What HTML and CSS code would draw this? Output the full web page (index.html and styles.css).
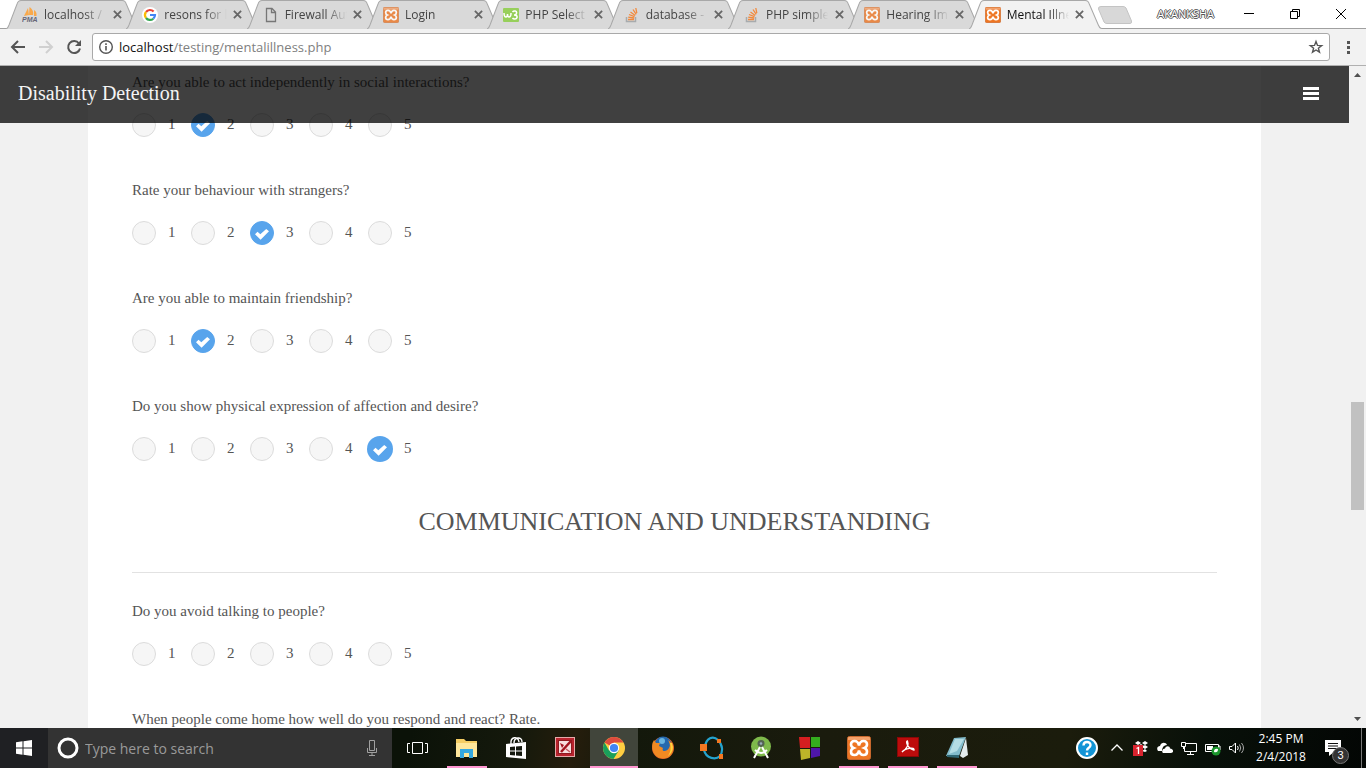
FILE: index.html
```html
<!DOCTYPE html>
<html lang="en">
<head>
<meta charset="utf-8">
<title>Mental Illness</title>
<link rel="stylesheet" href="styles.css">
</head>
<body>
<svg class="defs" aria-hidden="true">
  <symbol id="tab-shape" viewBox="0 0 133 29" preserveAspectRatio="none"><path d="M0 29C2 28 2 27 3 25L11 4Q12 .5 15 .5H116Q119 .5 120 4L129 25Q130 28 133 29" vector-effect="non-scaling-stroke"/></symbol>
  <symbol id="cross" viewBox="0 0 10 10"><path d="M1 1L9 9M9 1L1 9" fill="none" stroke="#666" stroke-width="2"/></symbol>
  <symbol id="xampp" viewBox="0 0 24 24"><rect x=".5" y=".5" width="23" height="23" rx="2" fill="#ee7623" stroke="#c8682d"/><path d="M1 2Q1 1 2 1H22Q23 1 23 2V4H1Z" fill="#f3a06a"/><path d="M12 9.500Q11 5 7.500 5Q4 5 4 8.300Q4 11 6.500 12Q4 13 4 15.700Q4 19 7.500 19Q11 19 12 14.500Q13 19 16.500 19Q20 19 20 15.700Q20 13 17.500 12Q20 11 20 8.300Q20 5 16.500 5Q13 5 12 9.500Z" fill="none" stroke="#fff" stroke-width="2.600"/></symbol>
  <symbol id="overflow" viewBox="0 0 16 16"><path d="M2.500 10v4.500h9V10" fill="none" stroke="#a8abad" stroke-width="1.500"/><path d="M4 12.500h6M4.200 10.200l6 .8M5 7.500l5.500 2.200M6.500 5l4.700 3.500M9 2.500l3.200 4.800M11.800 1l1 5.200" stroke="#f28a3d" stroke-width="1.300"/></symbol>
</svg>

<header class="browser">
  <div class="strip">
    <nav class="tabs" aria-label="Open tabs">
      <div class="tab"><svg class="shape"><use href="#tab-shape"/></svg><svg class="fav" viewBox="0 0 16 16"><path d="M6 1L2 9l5-1zM7.500 0c4 3 4 6 3.500 8H7zM12 3c3 2 2.500 4 2.500 6H12z" fill="#f9a94b"/><text x="0" y="15" class="pma">PMA</text></svg><span class="name">localhost /</span><button class="x" aria-label="Close tab"><svg><use href="#cross"/></svg></button></div>
      <div class="tab"><svg class="shape"><use href="#tab-shape"/></svg><svg class="fav" viewBox="0 0 16 16"><circle cx="8" cy="8" r="8" fill="#fff"/><g fill="none" stroke-width="2.200"><path d="M4 5A5 5 0 0 1 11.600 4.500" stroke="#ea4335"/><path d="M4 5A5 5 0 0 0 4 11" stroke="#fbbc05"/><path d="M4 11A5 5 0 0 0 11.300 11.700" stroke="#34a853"/><path d="M11.300 11.700A5 5 0 0 0 13 8H8" stroke="#4285f4"/></g></svg><span class="name">resons for l</span><button class="x" aria-label="Close tab"><svg><use href="#cross"/></svg></button></div>
      <div class="tab"><svg class="shape"><use href="#tab-shape"/></svg><svg class="fav" viewBox="0 0 16 16"><path d="M3.500 1.500H9L12.500 5V14.500H3.500ZM8.500 1.500V5.500H12.500" fill="none" stroke="#777" stroke-width="1.300"/></svg><span class="name">Firewall Aut</span><button class="x" aria-label="Close tab"><svg><use href="#cross"/></svg></button></div>
      <div class="tab"><svg class="shape"><use href="#tab-shape"/></svg><svg class="fav dim"><use href="#xampp"/></svg><span class="name">Login</span><button class="x" aria-label="Close tab"><svg><use href="#cross"/></svg></button></div>
      <div class="tab"><svg class="shape"><use href="#tab-shape"/></svg><svg class="fav" viewBox="0 0 16 16"><rect y="1" width="16" height="14" rx="1" fill="#97cf5b"/><path d="M1 6C1 9 2 10 3 10S4.500 9 4.500 7C4.500 9 5 10 6 10S8 9 8 6M9.500 5C11 3 14 4 13.500 6C13.500 7.500 12 8 11 8C13 8 14.500 9 14 10.500C13.500 12.500 10.500 12.500 9.500 11" fill="none" stroke="#fff" stroke-width="1.500"/></svg><span class="name">PHP Select</span><button class="x" aria-label="Close tab"><svg><use href="#cross"/></svg></button></div>
      <div class="tab"><svg class="shape"><use href="#tab-shape"/></svg><svg class="fav"><use href="#overflow"/></svg><span class="name">database -</span><button class="x" aria-label="Close tab"><svg><use href="#cross"/></svg></button></div>
      <div class="tab"><svg class="shape"><use href="#tab-shape"/></svg><svg class="fav"><use href="#overflow"/></svg><span class="name">PHP simple</span><button class="x" aria-label="Close tab"><svg><use href="#cross"/></svg></button></div>
      <div class="tab"><svg class="shape"><use href="#tab-shape"/></svg><svg class="fav dim"><use href="#xampp"/></svg><span class="name">Hearing Im</span><button class="x" aria-label="Close tab"><svg><use href="#cross"/></svg></button></div>
      <div class="tab active"><svg class="shape"><use href="#tab-shape"/></svg><svg class="fav"><use href="#xampp"/></svg><span class="name">Mental Illne</span><button class="x" aria-label="Close tab"><svg><use href="#cross"/></svg></button></div>
    </nav>
    <button class="new-tab" aria-label="New tab"><svg viewBox="0 0 36 18"><path d="M3 .5H25Q27 .5 28 2L33.500 15Q34 17.500 32 17.500H9Q7 17.500 6 16L.5 3Q0 .5 3 .5Z" fill="#d8d8d8" stroke="#c4c4c4"/></svg></button>
    <span class="profile">AKANKSHA</span>
    <div class="window">
      <button aria-label="Minimize"><svg viewBox="0 0 12 12"><path d="M1 5.500H11"/></svg></button>
      <button aria-label="Restore"><svg viewBox="0 0 12 12"><path d="M1.500 3.500H8.500V10.500H1.500ZM3.500 3.500V1.500H10.500V8.500H8.500"/></svg></button>
      <button aria-label="Close"><svg viewBox="0 0 12 12"><path d="M1 1L11 11M11 1L1 11"/></svg></button>
    </div>
  </div>
  <div class="toolbar">
    <button aria-label="Back"><svg viewBox="0 0 16 16"><path d="M15 8H2.500M8 2L2 8L8 14" fill="none" stroke="#555" stroke-width="2"/></svg></button>
    <button aria-label="Forward"><svg viewBox="0 0 16 16"><path d="M1 8H13.500M8 2L14 8L8 14" fill="none" stroke="#d0d0d0" stroke-width="2"/></svg></button>
    <button aria-label="Reload"><svg viewBox="0 0 16 16"><path d="M13 4.500A6 6 0 1 0 14 9.500" fill="none" stroke="#555" stroke-width="2"/><path d="M15 1V7H9Z" fill="#555"/></svg></button>
    <div class="address">
      <svg viewBox="0 0 16 16"><circle cx="8" cy="8" r="6.300" fill="none" stroke="#555" stroke-width="1.400"/><path d="M8 7V11.500M8 4.300V6" stroke="#555" stroke-width="1.600"/></svg>
      <a class="url" href="#top"><b>localhost</b>/testing/mentalillness.php</a>
      <button aria-label="Bookmark this page"><svg viewBox="0 0 16 16"><path d="M8 2.500L9.500 6.400L13.700 6.600L10.400 9.200L11.500 13.200L8 11L4.500 13.200L5.600 9.200L2.300 6.600L6.500 6.400Z" fill="none" stroke="#555" stroke-width="1.400"/></svg></button>
    </div>
    <button class="more" aria-label="Menu"><svg viewBox="0 0 16 16"><path d="M7 2h3v3H7zM7 7h3v3H7zM7 12h3v3H7z" fill="#555"/></svg></button>
  </div>
</header>

<div class="page">
  <div class="view" id="top">
    <header class="site">
      <a class="brand" href="#top">Disability Detection</a>
      <button class="burger" aria-label="Open menu"><i></i><i></i><i></i></button>
    </header>
    <main class="card">
      <fieldset class="question">
        <legend>Are you able to act independently in social interactions?</legend>
        <div class="scale">
          <label><input type="radio" name="q1">1</label><label><input type="radio" name="q1" checked>2</label><label><input type="radio" name="q1">3</label><label><input type="radio" name="q1">4</label><label><input type="radio" name="q1">5</label>
        </div>
      </fieldset>
      <fieldset class="question">
        <legend>Rate your behaviour with strangers?</legend>
        <div class="scale">
          <label><input type="radio" name="q2">1</label><label><input type="radio" name="q2">2</label><label><input type="radio" name="q2" checked>3</label><label><input type="radio" name="q2">4</label><label><input type="radio" name="q2">5</label>
        </div>
      </fieldset>
      <fieldset class="question">
        <legend>Are you able to maintain friendship?</legend>
        <div class="scale">
          <label><input type="radio" name="q3">1</label><label><input type="radio" name="q3" checked>2</label><label><input type="radio" name="q3">3</label><label><input type="radio" name="q3">4</label><label><input type="radio" name="q3">5</label>
        </div>
      </fieldset>
      <fieldset class="question">
        <legend>Do you show physical expression of affection and desire?</legend>
        <div class="scale">
          <label><input type="radio" name="q4">1</label><label><input type="radio" name="q4">2</label><label><input type="radio" name="q4">3</label><label><input type="radio" name="q4">4</label><label><input type="radio" name="q4" class="recent" checked>5</label>
        </div>
      </fieldset>
      <h2>COMMUNICATION AND UNDERSTANDING</h2>
      <fieldset class="question">
        <legend>Do you avoid talking to people?</legend>
        <div class="scale">
          <label><input type="radio" name="q5">1</label><label><input type="radio" name="q5">2</label><label><input type="radio" name="q5">3</label><label><input type="radio" name="q5">4</label><label><input type="radio" name="q5">5</label>
        </div>
      </fieldset>
      <fieldset class="question">
        <legend>When people come home how well do you respond and react? Rate.</legend>
      </fieldset>
    </main>
  </div>
  <div class="scrollbar" aria-hidden="true">
    <svg viewBox="0 0 17 17"><path d="M5 11H12L8.500 7Z"/></svg>
    <div class="above"></div><div class="thumb"></div><div class="below"></div>
    <svg viewBox="0 0 17 17"><path d="M5 6H12L8.500 10Z"/></svg>
  </div>
</div>

<footer class="taskbar">
  <button class="start" aria-label="Start"><svg viewBox="0 0 16 16"><path d="M0 2.200L6.500 1.300V7.500H0ZM7.500 1.200L16 0V7.500H7.500ZM0 8.500H6.500V14.700L0 13.800ZM7.500 8.500H16V16L7.500 14.800Z" fill="#fff"/></svg></button>
  <div class="search">
    <svg class="ring" viewBox="0 0 22 22"><circle cx="11" cy="11" r="9" fill="none" stroke="#fff" stroke-width="3"/></svg>
    <input type="text" placeholder="Type here to search" aria-label="Search">
    <svg class="mic" viewBox="0 0 12 18"><path d="M3.500 1.500H8.500V11.500H3.500ZM1.500 9V13.500H10.500V9M6 13.500V16.500M3 16.500H9" fill="none" stroke="#a0a0a0"/></svg>
  </div>
  <nav class="apps" aria-label="Applications">
    <button aria-label="Task view"><svg viewBox="0 0 24 24"><path d="M6.500 6.500H16.500V17.500H6.500ZM4 7.500H1.500V16.500H4M19 7.500H21.500V16.500H19" fill="none" stroke="#fff"/></svg></button>
    <button class="open" aria-label="File Explorer"><svg viewBox="0 0 24 24"><path d="M1 3H9L11 5H22V20H1Z" fill="#f5cd64"/><path d="M1 7H22V21H1Z" fill="#ffe79b"/><path d="M5 13H18V22H14V17H9V22H5Z" fill="#35a8e0"/></svg></button>
    <button aria-label="Store"><svg viewBox="0 0 24 24"><path d="M2 8L22 6V23L2 21Z" fill="#fff"/><path d="M7 8C6 1 14 -1 15 6M10 7C10 1 18 0 18 6" fill="none" stroke="#fff" stroke-width="1.400"/><path d="M6 11L11 10.500V14.500H6ZM12 10.400L18 10V14.500H12ZM6 15.500H11V19.500L6 19ZM12 15.500H18V20L12 19.600Z" fill="#15190f"/></svg></button>
    <button aria-label="Picture Manager"><svg viewBox="0 0 24 24"><rect x="2.500" y="1.500" width="19" height="19" fill="#b8232d" stroke="#e5aaa9"/><rect x="5.500" y="4.500" width="13" height="13" fill="#f7dede" stroke="#8e1a20"/><path d="M8 16L18 5" stroke="#a3131e" stroke-width="2.500"/><path d="M7 7L11 9L9 12Z" fill="#a3131e"/><path d="M13 13L17 16" stroke="#c65a60" stroke-width="1.500"/></svg></button>
    <button class="current open" aria-label="Chrome"><svg viewBox="0 0 24 24"><circle cx="12" cy="12" r="11" fill="#ffcd41"/><path d="M12 12L2.500 6.500A11 11 0 0 1 21.500 6.500H12Z" fill="#dd4b3e"/><path d="M2.500 6.500A11 11 0 0 0 11.500 23L16.800 14.500L12 12L7 14.500Z" fill="#1a9f5b"/><circle cx="12" cy="12" r="5.200" fill="#fff"/><circle cx="12" cy="12" r="4.100" fill="#4285f4"/></svg></button>
    <button aria-label="Firefox"><svg viewBox="0 0 24 24"><circle cx="12" cy="12" r="11" fill="#e5662a"/><circle cx="12" cy="9" r="8.500" fill="#2569ae"/><circle cx="11" cy="5" r="3" fill="#69b5e0"/><path d="M1.500 7L3 4L5 7L9 7L8 10L12 12C10 16 16 16 18 12C20 9 18 6 17 4C25 9 23 20 15 22C6 24 0 17 1.500 7Z" fill="#f18a22"/><path d="M21 7Q24 15 17 20Q21 14 19 7Z" fill="#ffd33f"/></svg></button>
    <button aria-label="Nodes"><svg viewBox="0 0 24 24"><path d="M5 11C6 2 13 -1 18 4C23 9 23 16 20 20C16 24 6 23 4 14" fill="none" stroke="#25a3ce" stroke-width="2.200"/><path d="M0 8H7V15H0ZM17 3H21V7H17ZM19 18H23V23H19Z" fill="#f47721"/></svg></button>
    <button aria-label="Android Studio"><svg viewBox="0 0 24 24"><circle cx="12" cy="10.500" r="10" fill="#7eb94b"/><circle cx="12" cy="7.500" r="3.500" fill="#536451"/><path d="M11 11L5 22M13 11L19 22M6 14Q12 20 18 14" fill="none" stroke="#fff" stroke-width="2"/><circle cx="12" cy="7.500" r="1.300" fill="#9ab"/></svg></button>
    <button aria-label="Blocks"><svg viewBox="0 0 24 24"><path d="M1 1H12V12H2Z" fill="#d51e20"/><path d="M13 1H22V11H13Z" fill="#34ad1e"/><path d="M2 13H12V22L3 24Z" fill="#bdb429"/><path d="M13 12H22V20L13 22Z" fill="#4e16a8"/></svg></button>
    <button class="open" aria-label="XAMPP"><svg><use href="#xampp"/></svg></button>
    <button class="open" aria-label="Acrobat Reader"><svg viewBox="0 0 24 24"><rect x="1.500" y="1.500" width="21" height="19" fill="#bd0c0c" stroke="#8b0707"/><path d="M6 16C11 13 13 8 11.500 5C9 5 12 13 18 14C19 11 9 12 6 16Z" fill="none" stroke="#fff" stroke-width="1.300"/></svg></button>
    <button class="open" aria-label="Notepad"><svg viewBox="0 0 24 24"><path d="M9 2L21 1L14 20L1 20Z" fill="#83bccc"/><path d="M10 3L19 3L12 15L4 18Z" fill="#b4dde5"/><path d="M21 2L23 19L18 22L15 20Z" fill="#e4eced"/><path d="M2 19L14 19V22L2 21Z" fill="#2f6673"/></svg></button>
  </nav>
  <div class="tray">
    <button class="help" aria-label="Help"><svg viewBox="0 0 24 24"><circle cx="12" cy="12" r="10" fill="#1294d6" stroke="#fff" stroke-width="2"/><path d="M8.500 9.500C8.500 5 15.500 5 15.500 9C15.500 12 12 11.500 12 14.500M12 16.500V19" fill="none" stroke="#fff" stroke-width="2.400"/></svg></button>
    <button aria-label="Show hidden icons"><svg viewBox="0 0 16 16"><path d="M2.500 10.500L8 5L13.500 10.500" fill="none" stroke="#fff" stroke-width="1.300"/></svg></button>
    <button aria-label="Dropbox"><svg viewBox="0 0 16 16"><path d="M2 3L5 1L8 3L5 5ZM9 3L12 1L15 3L12 5ZM9 7L12 5L15 7L12 9ZM9 11L12 9L14 11L12 12ZM5 6L8 4L11 6L8 8Z" fill="#fff"/><rect y="5" width="10" height="11" fill="#d9232e"/><path d="M3.500 8.500L5.500 7.500V14" fill="none" stroke="#fff" stroke-width="1.300"/></svg></button>
    <button aria-label="OneDrive"><svg viewBox="0 0 16 16"><path d="M1 11C-1 8 1 6 3 6C4 2 9 2 10 5C6 5 5 9 5 11Z" fill="#fff"/><path d="M6 13C4 11 6 8.500 8 8.500C9 5 13 6 13 8.500C17 9 17 13 14 13Z" fill="#fff"/></svg></button>
    <button aria-label="Network"><svg viewBox="0 0 16 16"><path d="M5 3.500H15.500V11.500H3.500V7M9.500 11.500V14.500M6 14.500H13M.5 2.500H4.500V6.500H.5ZM2.500 6.500V9" fill="none" stroke="#fff"/></svg></button>
    <button aria-label="Battery"><svg viewBox="0 0 16 16"><path d="M.5 4.500H13.500V11.500H.5ZM14 6H15V10H14" fill="none" stroke="#fff"/><path d="M2 6H8V10H2Z" fill="#fff"/><circle cx="11" cy="11" r="4.500" fill="#1a942b"/><path d="M9 12Q9 8 13 9Q13 13 9 12Z" fill="#fff"/></svg></button>
    <button aria-label="Volume"><svg viewBox="0 0 16 16"><path d="M.5 6.500H3L6.500 3V13L3 9.500H.5ZM8.500 6Q10 8 8.500 10" fill="none" stroke="#fff"/><path d="M10.500 4.500Q13 8 10.500 11.500M12.500 3Q16.500 8 12.500 13" fill="none" stroke="#aaa"/></svg></button>
    <time class="clock"><span>2:45 PM</span><span>2/4/2018</span></time>
    <button class="notes" aria-label="Notifications"><svg viewBox="0 0 16 16"><path d="M0 0H16V12H9L4 16V12H0Z" fill="#fff"/><path d="M3 3.500H13M3 6H13M3 8.500H13" stroke="#111"/></svg><span class="count">3</span></button>
  </div>
</footer>
</body>
</html>
```

FILE: styles.css
```css
* { box-sizing: border-box; }
body {
  margin: 0;
  height: 100vh;
  display: flex;
  flex-direction: column;
  overflow: hidden;
  background: #f1f1f1;
  font-family: "Open Sans", "Noto Sans", sans-serif;
}
button {
  margin: 0;
  padding: 0;
  border: 0;
  background: none;
  display: flex;
  align-items: center;
  justify-content: center;
}
svg { display: block; flex: none; }
.defs { position: absolute; width: 0; height: 0; }

/* Browser chrome */
.browser { flex: none; }
.strip {
  height: 29px;
  display: flex;
  padding: 0 2px 0 6px;
  background: #fff;
  border-bottom: 1px solid #a0a0a0;
}
.tabs { flex: 0 1 1096px; min-width: 0; display: flex; }
.tab {
  position: relative;
  flex: 1 1 0;
  min-width: 0;
  height: 29px;
  margin-right: -13px;
  padding: 0 17px 0 16px;
  display: flex;
  align-items: center;
  gap: 6px;
  font-size: 12px;
  color: #444;
}
.tab:last-child { margin-right: 0; }
.tab .shape {
  position: absolute;
  inset: 0;
  width: 100%;
  height: 29px;
  fill: #d9d9d9;
  stroke: #a8a8a8;
}
.tab.active { z-index: 1; color: #111; }
.tab.active .shape { fill: #f2f2f2; }
.fav { position: relative; width: 16px; height: 16px; }
.dim { opacity: .8; }
.pma { font: italic bold 7px "Liberation Sans", sans-serif; fill: #667; }
.name {
  position: relative;
  flex: 1;
  min-width: 0;
  overflow: hidden;
  white-space: nowrap;
  mask-image: linear-gradient(to right, #000 65%, transparent 100%);
}
.tab .x { position: relative; width: 10px; height: 10px; }
.x svg { width: 9px; height: 9px; }
.new-tab { width: 36px; margin-left: -4px; padding-top: 2px; }
.new-tab svg { width: 36px; height: 18px; }
.profile {
  margin-left: auto;
  padding-right: 12px;
  line-height: 28px;
  font-size: 11px;
  color: #fff;
  text-shadow: 1px 0 #555, -1px 0 #555, 0 1px #555, 0 -1px #555;
}
.window { display: flex; }
.window button { width: 46px; height: 27px; }
.window svg { width: 12px; height: 12px; fill: none; stroke: #000; }
.toolbar {
  height: 37px;
  display: flex;
  align-items: center;
  gap: 12px;
  padding: 0 10px;
  background: #f2f2f2;
  border-bottom: 1px solid #b0b0b0;
}
.toolbar svg { width: 16px; height: 16px; }
.toolbar .more { width: 16px; }
.address {
  flex: 1;
  height: 28px;
  margin: 0 -2px;
  padding: 0 5px;
  display: flex;
  align-items: center;
  gap: 5px;
  background: #fff;
  border: 1px solid #a9a9a9;
  border-radius: 3px;
}
.url { flex: 1; font-size: 13px; color: #808080; text-decoration: none; }
.url b { font-weight: 400; color: #111; }

/* Page */
.page { flex: 1; min-height: 0; display: flex; }
.view {
  position: relative;
  flex: 1;
  min-width: 0;
  overflow: hidden;
  padding: 0 88px;
  font-family: "Liberation Serif", serif;
  color: #555;
}
.site {
  position: absolute;
  z-index: 2;
  top: 0;
  left: 0;
  right: 0;
  height: 57px;
  padding: 0 30px 2px 18px;
  display: flex;
  align-items: center;
  justify-content: space-between;
  background: rgba(0, 0, 0, .75);
}
.brand { font-size: 20px; color: #f4f4f4; text-decoration: none; }
.burger { width: 16px; flex-direction: column; gap: 2px; }
.burger i { width: 16px; height: 3px; background: #fff; }
.card { min-height: 100%; padding: 5px 44px 0; background: #fff; }
.question { margin: 0 0 42px; padding: 0; border: 0; min-width: 0; }
.question legend {
  padding: 0;
  margin-bottom: 20px;
  font-size: 15px;
  line-height: 22px;
  white-space: nowrap;
}
.scale { display: flex; }
.scale label {
  width: 59px;
  display: flex;
  align-items: flex-start;
  gap: 12px;
  font-size: 15px;
  line-height: 22px;
}
.scale input {
  appearance: none;
  flex: none;
  width: 24px;
  height: 24px;
  margin: 0;
  border: 1px solid #dcdcdc;
  border-radius: 50%;
  background: #f6f6f6;
}
.scale input:checked {
  display: grid;
  place-items: center;
  border-color: #58a4ec;
  background: #58a4ec;
}
.scale input:checked::after {
  content: "";
  width: 14px;
  height: 12px;
  margin-top: 2px;
  background: #fff;
  clip-path: polygon(0 52%, 18% 32%, 38% 52%, 80% 8%, 100% 28%, 40% 98%);
}
.scale .recent { box-shadow: 0 0 0 1px #58a4ec; }
h2 {
  margin: 0 0 27px;
  padding-bottom: 31px;
  border-bottom: 1px solid #e2e2e2;
  font-size: 26px;
  line-height: 38px;
  font-weight: 400;
  text-align: center;
}
.scrollbar {
  width: 17px;
  display: flex;
  flex-direction: column;
  align-items: center;
  background: #f1f1f1;
}
.scrollbar svg { width: 17px; height: 17px; fill: #505050; }
.above { flex: 319; }
.thumb { flex: 108; width: 13px; background: #c1c1c1; }
.below { flex: 201; }

/* Taskbar */
.taskbar {
  flex: none;
  height: 40px;
  display: flex;
  background: linear-gradient(100deg, #0b1208 0 30%, #15190c 38%, #251d0c 42%, #13180b 46%, #1a1b0d 60%, #1b1c0c 78%, #081009 88%, #030604);
}
.start { width: 48px; background: #1f2023; }
.start svg { width: 16px; height: 16px; }
.search {
  flex: 0 1 344px;
  display: flex;
  align-items: center;
  gap: 6px;
  padding: 0 14px 0 9px;
  background: #333;
}
.ring { width: 22px; height: 22px; }
.search input {
  flex: 1;
  min-width: 0;
  padding: 0;
  border: 0;
  background: none;
  color: #fff;
  font: 14px "Open Sans", sans-serif;
}
.search input::placeholder { color: #9a9a9a; }
.mic { width: 12px; height: 18px; }
.apps { display: flex; gap: 1px; padding-left: 2px; }
.apps button { width: 48px; border: solid transparent; border-width: 2px 0; }
.apps svg { width: 24px; height: 24px; }
.apps .open {
  background: linear-gradient(#ff96d0, #ff96d0) center bottom / 40px 2px no-repeat border-box;
}
.apps .current {
  background: linear-gradient(#ff96d0, #ff96d0) center bottom / 48px 2px no-repeat border-box, #41453b border-box;
}
.tray { margin-left: auto; display: flex; align-items: center; padding-right: 4px; }
.tray button { width: 24px; height: 40px; }
.tray svg { width: 16px; height: 16px; }
.tray .help { width: 36px; }
.tray .help svg { width: 24px; height: 24px; }
.clock {
  width: 64px;
  display: flex;
  flex-direction: column;
  text-align: center;
  font-size: 12px;
  line-height: 18px;
  color: #fff;
}
.tray .notes {
  position: relative;
  width: 49px;
  padding-right: 8px;
  border-right: 1px solid #777;
}
.count {
  position: absolute;
  left: 19px;
  top: 19px;
  width: 17px;
  height: 17px;
  border: 1px solid #777;
  border-radius: 50%;
  background: #333;
  font-size: 11px;
  line-height: 15px;
  color: #fff;
}
```
